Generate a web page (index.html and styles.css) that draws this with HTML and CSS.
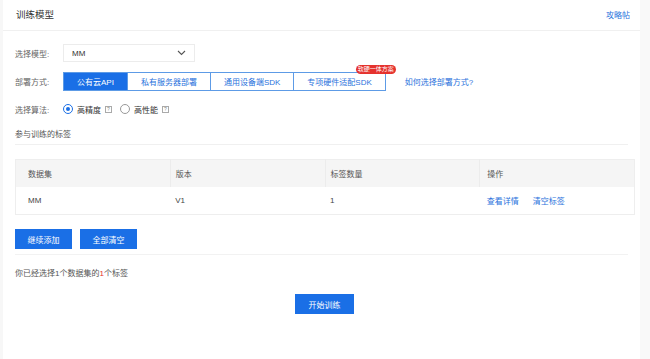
FILE: index.html
```html
<!DOCTYPE html>
<html lang="zh-CN">
<head>
  <meta charset="UTF-8" />
  <meta name="viewport" content="width=device-width, initial-scale=1.0" />
  <link rel="stylesheet" href="styles.css">
  <title>训练模型</title>
</head>
<body>
  <div class="page">
    <header class="head">
      <h1>训练模型</h1>
      <a href="#" class="link">攻略帖</a>
    </header>

    <main class="content">
      <div class="field">
        <span class="label">选择模型:</span>
        <div class="select">
          <span>MM</span>
          <svg width="9" height="6" viewBox="0 0 9 6"><path d="M1 1l3.5 3.5L8 1" fill="none" stroke="#555" stroke-width="1.1"/></svg>
        </div>
      </div>

      <div class="field">
        <span class="label">部署方式:</span>
        <div class="tabs">
          <button class="tab active">公有云API</button>
          <button class="tab">私有服务器部署</button>
          <button class="tab">通用设备端SDK</button>
          <button class="tab">专项硬件适配SDK<span class="badge">软硬一体方案</span></button>
        </div>
        <a href="#" class="link how">如何选择部署方式?</a>
      </div>

      <div class="field">
        <span class="label">选择算法:</span>
        <label class="radio checked"><i></i>高精度<em>?</em></label>
        <label class="radio"><i></i>高性能<em>?</em></label>
      </div>

      <div class="section-title">参与训练的标签</div>

      <table class="grid">
        <thead>
          <tr><th>数据集</th><th>版本</th><th>标签数量</th><th>操作</th></tr>
        </thead>
        <tbody>
          <tr>
            <td>MM</td><td>V1</td><td>1</td>
            <td><a href="#" class="link">查看详情</a><a href="#" class="link gap">清空标签</a></td>
          </tr>
        </tbody>
      </table>

      <div class="actions">
        <button class="btn">继续添加</button>
        <button class="btn">全部清空</button>
      </div>

      <p class="summary">你已经选择1个数据集的<span class="hl">1</span>个标签</p>

      <div class="submit">
        <button class="btn wide">开始训练</button>
      </div>
    </main>
  </div>
</body>
</html>
```

FILE: styles.css
```css
* {
  box-sizing: border-box;
}
body {
  margin: 0;
  background: #fff;
  font-family: "Liberation Sans", "Noto Sans CJK SC", sans-serif;
  font-size: 8px;
  color: #333;
}
.page {
  width: 650px;
  height: 359px;
  border-left: 3px solid #f7f7f7;
  border-right: 10px solid #f9f9f9;
}
.head {
  height: 31px;
  display: flex;
  align-items: center;
  justify-content: space-between;
  padding: 0 10px 2px 13px;
  border-bottom: 1px solid #f0f0f0;
}
.head h1 {
  margin: 0;
  font-size: 9.5px;
  font-weight: normal;
  color: #333;
}
.link {
  color: #2a72dc;
  text-decoration: none;
}
.content {
  padding: 0 2px 0 12px;
}
.field {
  display: flex;
  align-items: center;
  height: 18px;
  margin-top: 10px;
}
.field:first-child {
  margin-top: 13px;
}
.label {
  width: 48px;
  color: #666;
}
.select {
  width: 132px;
  height: 18px;
  border: 1px solid #ececec;
  display: flex;
  align-items: center;
  justify-content: space-between;
  padding: 0 8px 0 8px;
  color: #333;
}
.tabs {
  display: flex;
  height: 19px;
  border: 1px solid #5d9be6;
}
.tab {
  position: relative;
  height: 17px;
  padding: 0 13px;
  border: none;
  border-left: 1px solid #5d9be6;
  background: #fff;
  color: #2a72dc;
  font: inherit;
}
.tab:first-child {
  border-left: none;
}
.tab.active {
  background: #1a6fe6;
  color: #fff;
}
.badge {
  position: absolute;
  right: -11px;
  top: -8px;
  height: 9px;
  padding: 0 2px;
  border-radius: 5px;
  background: #e5322d;
  color: #fff;
  font-size: 6px;
  line-height: 9px;
  white-space: nowrap;
}
.how {
  margin-left: 19px;
}
.radio {
  display: flex;
  align-items: center;
  margin-right: 8px;
  color: #333;
}
.radio i {
  width: 10px;
  height: 10px;
  border: 1px solid #999;
  border-radius: 50%;
  margin-right: 4px;
  position: relative;
}
.radio.checked i {
  border-color: #1a6fe6;
}
.radio.checked i::after {
  content: "";
  position: absolute;
  left: 2px;
  top: 2px;
  width: 4px;
  height: 4px;
  border-radius: 50%;
  background: #1a6fe6;
}
.radio em {
  font-style: normal;
  width: 7px;
  height: 7px;
  margin-left: 4px;
  border: 1px solid #aaa;
  color: #888;
  font-size: 5px;
  line-height: 5px;
  text-align: center;
}
.section-title {
  margin-top: 8px;
  height: 19px;
  line-height: 17px;
  color: #555;
  border-bottom: 1px solid #f0f0f0;
  margin-right: 10px;
}
.grid {
  margin-top: 14px;
  width: 620px;
  border-collapse: collapse;
  border: 1px solid #eee;
  table-layout: fixed;
}
.grid th,
.grid td {
  text-align: left;
  font-weight: normal;
  padding: 0 0 0 5px;
}
.grid th:first-child,
.grid td:first-child {
  padding-left: 12px;
}
.grid th:last-child,
.grid td:last-child {
  padding-left: 7px;
}
.grid th {
  height: 27px;
  background: #f5f5f5;
  color: #555;
  border-left: 1px solid #ececec;
}
.grid th:first-child {
  border-left: none;
}
.grid td {
  height: 28px;
  color: #444;
}
.gap {
  margin-left: 14px;
}
.actions {
  display: flex;
  gap: 8px;
  margin-top: 14px;
  padding-bottom: 5px;
  border-bottom: 1px solid #f2f2f2;
  margin-right: 10px;
}
.btn {
  height: 20px;
  width: 57px;
  border: none;
  background: #1a6fe6;
  color: #fff;
  font: inherit;
}
.btn.wide {
  width: 59px;
}
.summary {
  margin: 10px 0 0;
  height: 18px;
  line-height: 18px;
  color: #555;
}
.hl {
  color: #e5322d;
}
.submit {
  margin-top: 11px;
  display: flex;
  justify-content: center;
  padding-right: 4px;
}
```
